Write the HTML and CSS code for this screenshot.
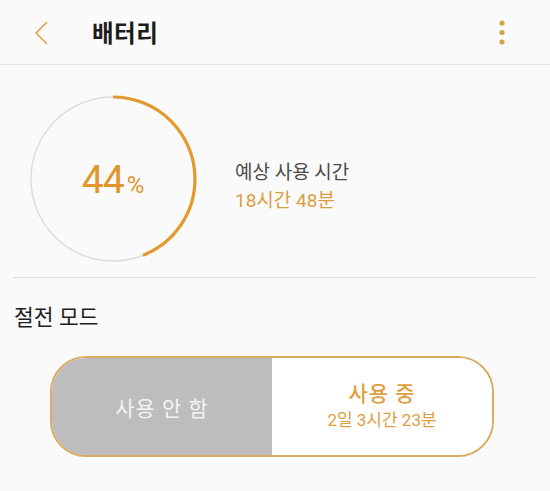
FILE: index.html
```html
<!DOCTYPE html>
<html lang="ko">
<head>
<meta charset="utf-8">
<link rel="stylesheet" href="styles.css">
</head>
<body>
<header class="appbar">
  <span class="back">
    <svg width="14" height="24" viewBox="0 0 14 24"><path d="M12.5 1.5 L2 12 L12.5 22.5" fill="none" stroke="#dba24e" stroke-width="1.6" stroke-linecap="round" stroke-linejoin="round"/></svg>
  </span>
  <h1 class="title">배터리</h1>
  <span class="more">
    <svg width="6" height="26" viewBox="0 0 6 26"><circle cx="3" cy="3" r="2.6" fill="#d5a24c"/><circle cx="3" cy="12.5" r="2.6" fill="#d5a24c"/><circle cx="3" cy="22" r="2.6" fill="#d5a24c"/></svg>
  </span>
</header>

<section class="summary">
  <div class="gauge">
    <svg class="ring" width="170" height="170" viewBox="0 0 170 170">
      <circle cx="85" cy="85" r="82" fill="none" stroke="#dedede" stroke-width="1.6"/>
      <circle cx="85" cy="85" r="82" fill="none" stroke="#e29a2e" stroke-width="3.2" stroke-dasharray="226.7 600" transform="rotate(-90 85 85)"/>
    </svg>
    <div class="pct"><span class="num">44</span><span class="sign">%</span></div>
  </div>
  <div class="estimate">
    <div class="est-label">예상 사용 시간</div>
    <div class="est-value">18시간 48분</div>
  </div>
</section>

<hr class="divider">

<h2 class="section-title">절전 모드</h2>

<div class="toggle">
  <div class="opt off">사용 안 함</div>
  <div class="opt on">
    <div class="on-label">사용 중</div>
    <div class="on-time">2일 3시간 23분</div>
  </div>
</div>
</body>
</html>
```

FILE: styles.css
```css
html, body {
  margin: 0;
  padding: 0;
}
body {
  width: 550px;
  height: 491px;
  background: #fafafa;
  font-family: Roboto, "Noto Sans CJK KR", sans-serif;
  color: #222;
  overflow: hidden;
}
.appbar {
  display: flex;
  align-items: center;
  height: 64px;
  border-bottom: 1px solid #e6e6e6;
  box-sizing: content-box;
}
.back {
  display: flex;
  margin-left: 34px;
  margin-top: 1px;
}
.title {
  margin: 0 0 0 44px;
  font-size: 23.5px;
  font-weight: 700;
  color: #1c1c1c;
  letter-spacing: 0.5px;
}
.more {
  display: flex;
  margin-left: auto;
  margin-right: 45px;
  margin-top: 1px;
}
.summary {
  display: flex;
  align-items: center;
  padding: 29px 0 13px 28px;
}
.gauge {
  display: grid;
  width: 170px;
  height: 170px;
}
.ring, .pct {
  grid-area: 1 / 1;
}
.pct {
  display: flex;
  align-items: baseline;
  justify-content: center;
  align-self: center;
  color: #e1952b;
  padding-left: 0;
  padding-top: 2px;
}
.num {
  font-size: 39px;
  line-height: 1;
  letter-spacing: -1px;
}
.sign {
  font-size: 24px;
  margin-left: 3px;
}
.estimate {
  margin-left: 37px;
  margin-top: 16px;
}
.est-label {
  font-size: 19px;
  line-height: 28px;
  color: #4a4a4a;
}
.est-value {
  font-size: 19px;
  line-height: 28px;
  color: #d9a043;
  font-weight: 400;
}
.divider {
  margin: 0 13px;
  border: 0;
  border-top: 1px solid #dddddd;
  height: 0;
}
.section-title {
  margin: 26px 0 0 14px;
  font-size: 21.5px;
  font-weight: 400;
  line-height: 28px;
  color: #1e1e1e;
}
.toggle {
  display: flex;
  margin: 24px 0 0 50px;
  width: 444px;
  height: 101px;
  box-sizing: border-box;
  border: 2px solid #dcab5e;
  border-radius: 36px;
  overflow: hidden;
}
.opt {
  flex: 1 1 0;
  display: flex;
  flex-direction: column;
  align-items: center;
  justify-content: center;
}
.off {
  background: #bdbdbd;
  color: #f4f4f4;
  font-size: 21px;
  letter-spacing: 1px;
}
.on {
  background: #ffffff;
  color: #dea03e;
}
.on-label {
  font-size: 21px;
  font-weight: 500;
  line-height: 27px;
  letter-spacing: 1px;
}
.on-time {
  font-size: 17px;
  font-weight: 400;
  line-height: 24px;
}
```
